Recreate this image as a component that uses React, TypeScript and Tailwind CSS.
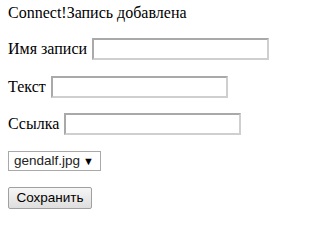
export default function App() {
  const serif = { fontFamily: '"Liberation Serif", "Times New Roman", serif' };
  const inputCls =
    'ml-[5px] h-[22px] w-[177px] border-2 border-t-[#a9a9a9] border-l-[#a9a9a9] border-r-[#cfcfcf] border-b-[#cfcfcf] bg-white outline-none';

  return (
    <div className="min-h-[247px] w-[300px] bg-white px-[8px] pt-[4px] text-[16px] leading-[18px] text-black font-['Liberation_Serif',serif]" style={serif}>
      <div>Connect!Запись добавлена</div>

      <div className="mt-[16px] flex h-[22px] items-center">
        <span>Имя записи</span>
        <input type="text" className={inputCls} />
      </div>

      <div className="mt-[16px] flex h-[22px] items-center">
        <span>Текст</span>
        <input type="text" className={inputCls} />
      </div>

      <div className="mt-[15px] flex h-[22px] items-center">
        <span>Ссылка</span>
        <input type="text" className={inputCls} />
      </div>

      <div className="mt-[16px] flex">
        <div className="flex h-[20px] w-[93px] items-center justify-between border border-[#a9a9a9] bg-white pl-[5px] pr-[6px] text-[13.5px] font-['Liberation_Sans',Arial,sans-serif] text-[#222]">
          <span>gendalf.jpg</span>
          <span className="text-[11px] leading-none text-black">▼</span>
        </div>
      </div>

      <div className="mt-[16px] flex">
        <button
          type="button"
          className="flex h-[22px] w-[84px] items-center justify-center rounded-[2px] border border-[#a0a0a0] bg-gradient-to-b from-[#f6f6f6] to-[#dedede] text-[13.5px] font-['Liberation_Sans',Arial,sans-serif] text-black"
        >
          Сохранить
        </button>
      </div>
    </div>
  );
}
